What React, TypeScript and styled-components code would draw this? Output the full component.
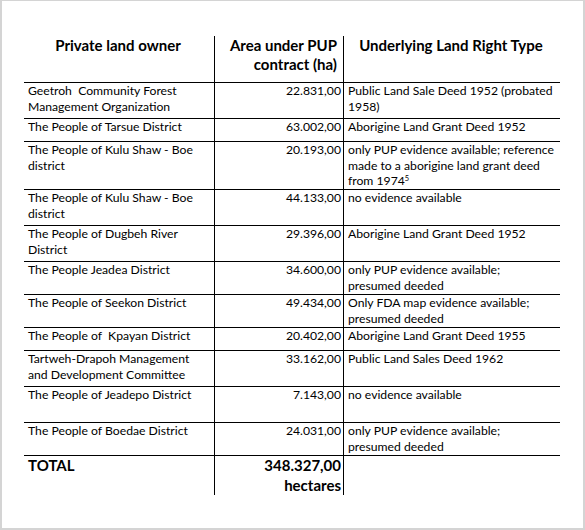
import React from "react";
import styled, {createGlobalStyle} from "styled-components";

const GlobalStyle = createGlobalStyle`
    html, body {
        margin: 0;
        padding: 0;
        background: #ffffff;
    }
`

const Sup = styled.sup`
    font-size: 7.5px;
    line-height: 0;
    vertical-align: 4px;
`

interface Row {
    owner: string;
    area: string;
    right: React.ReactNode;
    height: number;
    tight?: boolean;
}

// row heights measured from the reference, rule included
const rows: Array<Row> = [
    {owner: "Geetroh  Community Forest\nManagement Organization", area: "22.831,00", right: "Public Land Sale Deed 1952 (probated\n1958)", height: 36},
    {owner: "The People of Tarsue District", area: "63.002,00", right: "Aborigine Land Grant Deed 1952", height: 23},
    {owner: "The People of Kulu Shaw - Boe\ndistrict", area: "20.193,00", right: <>{"only PUP evidence available; reference\nmade to a aborigine land grant deed\nfrom 1974"}<Sup>5</Sup></>, height: 48, tight: true},
    {owner: "The People of Kulu Shaw - Boe\ndistrict", area: "44.133,00", right: "no evidence available", height: 36},
    {owner: "The People of Dugbeh River\nDistrict", area: "29.396,00", right: "Aborigine Land Grant Deed 1952", height: 36},
    {owner: "The People Jeadea District", area: "34.600,00", right: "only PUP evidence available;\npresumed deeded", height: 33},
    {owner: "The People of Seekon District", area: "49.434,00", right: "Only FDA map evidence available;\npresumed deeded", height: 33},
    {owner: "The People of  Kpayan District", area: "20.402,00", right: "Aborigine Land Grant Deed 1955", height: 23},
    {owner: "Tartweh-Drapoh Management\nand Development Committee", area: "33.162,00", right: "Public Land Sales Deed 1962", height: 36},
    {owner: "The People of Jeadepo District", area: "7.143,00", right: "no evidence available", height: 36},
    {owner: "The People of Boedae District", area: "24.031,00", right: "only PUP evidence available;\npresumed deeded", height: 32},
]

export default function App(){
    return(
        <>
            <GlobalStyle/>
            <Page>
                <Sheet>
                    <colgroup>
                        <col style={{width: 190}}/>
                        <col style={{width: 129}}/>
                        <col style={{width: 217}}/>
                    </colgroup>
                    <thead>
                        <tr>
                            <HeadCell $align="center">Private land owner</HeadCell>
                            <HeadCell $align="right" $divider>{"Area under PUP\ncontract (ha)"}</HeadCell>
                            <HeadCell $align="center" $divider>Underlying Land Right Type</HeadCell>
                        </tr>
                    </thead>
                    <tbody>
                        {rows.map((row, key) => (
                            <tr key={key}>
                                <Cell $h={row.height} $tight={row.tight}>{row.owner}</Cell>
                                <NumCell $h={row.height} $tight={row.tight} $divider>{row.area}</NumCell>
                                <Cell $h={row.height} $tight={row.tight} $divider>{row.right}</Cell>
                            </tr>
                        ))}
                        <tr>
                            <TotalCell>TOTAL</TotalCell>
                            <TotalCell $align="right" $divider>{"348.327,00\nhectares"}</TotalCell>
                            <TotalCell $divider></TotalCell>
                        </tr>
                    </tbody>
                </Sheet>
            </Page>
        </>
    )
}

const Page = styled.div`
    box-sizing: border-box;
    width: 585px;
    height: 530px;
    padding: 35px 0 0 22px;
    border: 1px solid #d4d4d4;
    border-left-width: 2px;
    border-bottom-width: 2px;
    border-right-width: 2px;
    background: #ffffff;
    color: #000000;
    font-family: Lato, "Liberation Sans", sans-serif;
`

const Sheet = styled.table`
    width: 536px;
    table-layout: fixed;
    border-collapse: separate;
    border-spacing: 0;
`

const HeadCell = styled.th<{$align: string, $divider?: boolean}>`
    box-sizing: border-box;
    height: 47px;
    padding: 0 6px 0 4px;
    vertical-align: top;
    text-align: ${props => props.$align};
    font-size: 15px;
    font-weight: 700;
    line-height: 19px;
    white-space: pre;
    border-bottom: 1px solid #000;
    border-left: ${props => props.$divider ? "1px solid #000" : "none"};
`

const Cell = styled.td<{$h: number, $tight?: boolean, $divider?: boolean}>`
    box-sizing: border-box;
    height: ${props => props.$h}px;
    padding: 0 2px 0 4px;
    vertical-align: top;
    font-size: 12.2px;
    line-height: ${props => props.$tight ? "15.6px" : "16px"};
    white-space: pre;
    border-bottom: 1px solid #000;
    border-left: ${props => props.$divider ? "1px solid #000" : "none"};
`

const NumCell = styled(Cell)`
    text-align: right;
`

const TotalCell = styled.td<{$align?: string, $divider?: boolean}>`
    box-sizing: border-box;
    height: 39px;
    padding: 0 2px 0 4px;
    vertical-align: top;
    text-align: ${props => props.$align || "left"};
    font-size: 15px;
    font-weight: 700;
    line-height: 19.5px;
    white-space: pre;
    border-left: ${props => props.$divider ? "1px solid #000" : "none"};
`
